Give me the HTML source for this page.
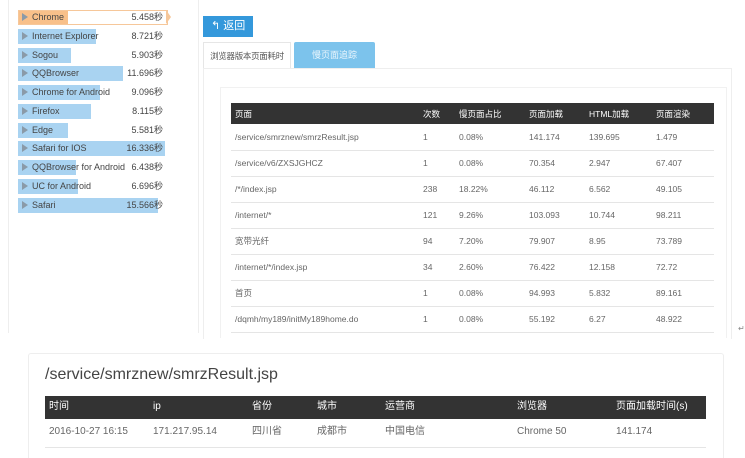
<!DOCTYPE html><html style="overflow:hidden;height:458px"><head><meta charset="utf-8"><style>
body{margin:0;width:745px;height:458px;background:#fff;font-family:"Liberation Sans","Noto Sans CJK SC",sans-serif;position:relative;overflow:hidden;color:#555}
.a{position:absolute}
.bar{position:absolute;left:18px;height:15px;background:#a9d3f1;font-size:9px;line-height:15px}
.lbl{position:absolute;left:14px;white-space:nowrap;color:#444;font-size:9px}
.val{position:absolute;left:105px;width:40px;text-align:right;color:#444;font-size:9px}
.tri{position:absolute;left:4px;top:3px;width:0;height:0;border-left:6px solid #8a9aa8;border-top:4.5px solid transparent;border-bottom:4.5px solid transparent}
table{border-collapse:collapse;position:absolute}
td{font-size:8.5px;color:#666;padding:0 0 0 4px;white-space:nowrap}
th{font-size:8.5px;color:#fff;font-weight:normal;text-align:left;padding:0 0 0 4px;background:#333}
.b td,.b th{font-size:10px;vertical-align:middle;line-height:12px}
.b span{display:inline-block;vertical-align:middle}
</style></head><body>
<div class="a" style="left:8px;top:0;width:1px;height:333px;background:#eee"></div>
<div class="a" style="left:198px;top:0;width:1px;height:333px;background:#eee"></div>

<div class="bar" style="top:10px;width:150px;background:#fff;border:1px solid #f6c79a;box-sizing:border-box"><div style="position:absolute;left:0;top:0;width:49px;height:13px;background:#f8c08a"></div></div>
<div class="a" style="left:166px;top:10px;width:0;height:0;border-left:5px solid #f6c79a;border-top:7.5px solid transparent;border-bottom:7.5px solid transparent"></div>

<div id="bars"></div>
<script>
var d=[["Chrome","5.458",0],["Internet Explorer","8.721",78],["Sogou","5.903",53],["QQBrowser","11.696",105],["Chrome for Android","9.096",82],["Firefox","8.115",73],["Edge","5.581",50],["Safari for IOS","16.336",147],["QQBrowser for Android","6.438",58],["UC for Android","6.696",60],["Safari","15.566",140]];
var h="";d.forEach(function(r,i){var t=10+i*18.75;
if(i>0)h+='<div class="bar" style="top:'+t+'px;width:'+r[2]+'px"></div>';
h+='<div class="a" style="left:18px;top:'+t+'px;height:15px;width:150px;line-height:15px"><div class="tri"></div><span class="lbl">'+r[0]+'</span><span class="val">'+r[1]+'秒</span></div>';});
document.getElementById("bars").innerHTML=h;
</script>

<div class="a" style="left:203px;top:16px;width:50px;height:21px;background:#3498db;color:#fff;font-size:11px;line-height:21px"><span style="margin-left:8px">&#x21B0;</span> 返回</div>
<div class="a" style="left:203px;top:42px;width:86px;height:26px;border:1px solid #e6e6e6;border-bottom:none;background:#fff;font-size:8.5px;line-height:26px;text-align:center;color:#555;white-space:nowrap;letter-spacing:-0.3px">浏览器版本页面耗时</div>
<div class="a" style="left:294px;top:42px;width:81px;height:26px;background:#7cc3ec;border-radius:2px 2px 0 0;font-size:9px;line-height:26px;text-align:center;color:#eaf6fd">慢页面追踪</div>
<div class="a" style="left:203px;top:68px;width:527px;height:270px;border:1px solid #eee;border-bottom:none"></div>
<div class="a" style="left:220px;top:87px;width:505px;height:250px;border:1px solid #f1f1f1;border-bottom:none"></div>

<table style="left:231px;top:103px;width:483px">
<tr style="height:21px"><th style="width:184px">页面</th><th style="width:32px">次数</th><th style="width:66px">慢页面占比</th><th style="width:56px">页面加载</th><th style="width:63px">HTML加载</th><th>页面渲染</th></tr>
<tr style="height:26px;border-bottom:1px solid #e5e5e5"><td>/service/smrznew/smrzResult.jsp</td><td>1</td><td>0.08%</td><td>141.174</td><td>139.695</td><td>1.479</td></tr>
<tr style="height:26px;border-bottom:1px solid #e5e5e5"><td>/service/v6/ZXSJGHCZ</td><td>1</td><td>0.08%</td><td>70.354</td><td>2.947</td><td>67.407</td></tr>
<tr style="height:26px;border-bottom:1px solid #e5e5e5"><td>/*/index.jsp</td><td>238</td><td>18.22%</td><td>46.112</td><td>6.562</td><td>49.105</td></tr>
<tr style="height:26px;border-bottom:1px solid #e5e5e5"><td>/internet/*</td><td>121</td><td>9.26%</td><td>103.093</td><td>10.744</td><td>98.211</td></tr>
<tr style="height:26px;border-bottom:1px solid #e5e5e5"><td>宽带光纤</td><td>94</td><td>7.20%</td><td>79.907</td><td>8.95</td><td>73.789</td></tr>
<tr style="height:26px;border-bottom:1px solid #e5e5e5"><td>/internet/*/index.jsp</td><td>34</td><td>2.60%</td><td>76.422</td><td>12.158</td><td>72.72</td></tr>
<tr style="height:26px;border-bottom:1px solid #e5e5e5"><td>首页</td><td>1</td><td>0.08%</td><td>94.993</td><td>5.832</td><td>89.161</td></tr>
<tr style="height:26px;border-bottom:1px solid #e5e5e5"><td>/dqmh/my189/initMy189home.do</td><td>1</td><td>0.08%</td><td>55.192</td><td>6.27</td><td>48.922</td></tr>
</table>
<div class="a" style="left:738px;top:324px;font-size:8px;color:#888">↵</div>

<div class="a" style="left:28px;top:353px;width:696px;height:105px;border:1px solid #eee;border-bottom:none;border-radius:3px 3px 0 0;box-sizing:border-box"></div>
<div class="a" style="left:45px;top:366px;font-size:16px;color:#444">/service/smrznew/smrzResult.jsp</div>
<table class="b" style="left:45px;top:396px;width:661px">
<tr style="height:23px"><th style="width:100px"><span>时间</span></th><th style="width:95px"><span>ip</span></th><th style="width:61px"><span>省份</span></th><th style="width:64px"><span>城市</span></th><th style="width:128px"><span>运营商</span></th><th style="width:95px"><span>浏览器</span></th><th><span>页面加载时间(s)</span></th></tr>
<tr style="height:28px;border-bottom:1px solid #e5e5e5"><td><span>2016-10-27 16:15</span></td><td><span>171.217.95.14</span></td><td><span>四川省</span></td><td><span>成都市</span></td><td><span>中国电信</span></td><td><span>Chrome 50</span></td><td><span>141.174</span></td></tr>
</table>
</body></html>
